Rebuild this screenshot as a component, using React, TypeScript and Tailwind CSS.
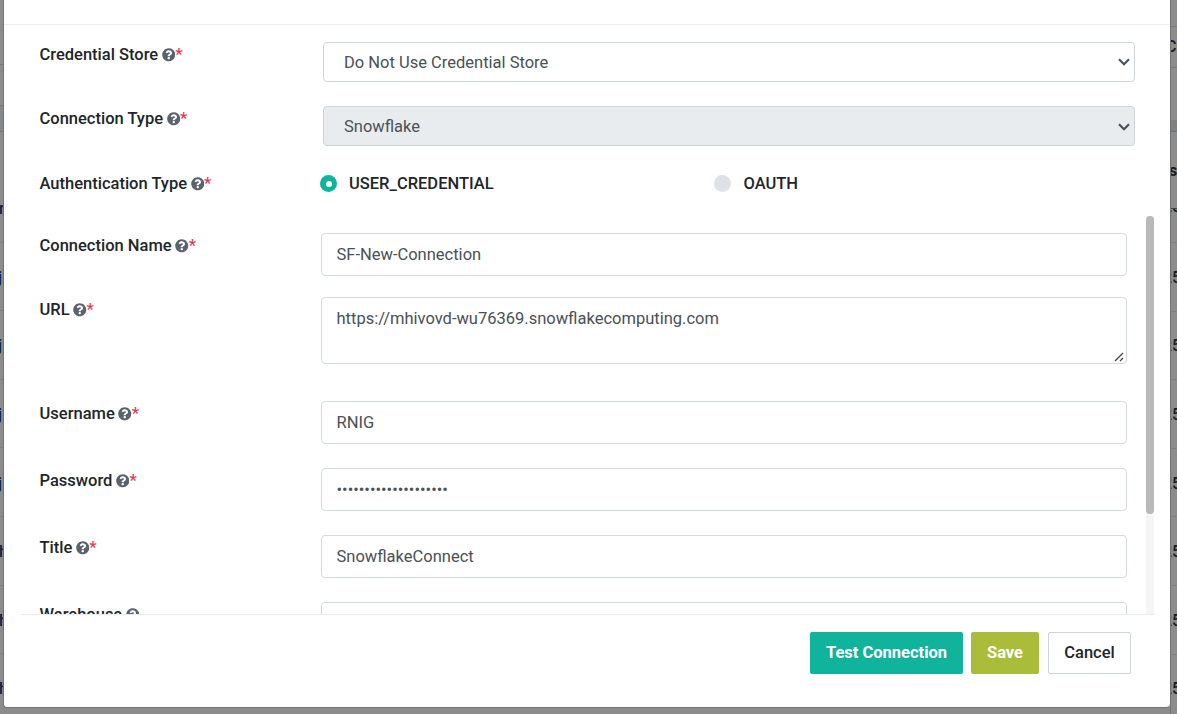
import React from "react";
import { FaQuestionCircle } from "react-icons/fa";

function Label({ text, required = true }: { text: string; required?: boolean }) {
  return (
    <div className="flex h-6 w-[281.5px] shrink-0 items-center whitespace-nowrap pl-[0.5px] text-[16.5px] font-medium leading-6 text-[#212529]">
      <span>{text}</span>
      <FaQuestionCircle className="ml-[3.5px] size-[13.5px] text-[#59636e]" />
      {required && <span className="font-medium text-[#e8384f]">*</span>}
    </div>
  );
}

function Chevron() {
  return (
    <svg className="mt-[1px] h-2 w-3" viewBox="0 0 12 8" fill="none" stroke="#495057" strokeWidth="2.1">
      <path d="M1 1.2 6 6.2l5-5" />
    </svg>
  );
}

function Select({ value, className }: { value: string; className: string }) {
  return (
    <div className={`flex w-[812px] items-center justify-between rounded-[4px] border border-[#ced4da] pl-5 pr-[4px] text-[16.5px] text-[#495057] ${className}`}>
      <span className="pt-[3px]">{value}</span>
      <Chevron />
    </div>
  );
}

function Field({ label, required, height, children }: { label: string; required?: boolean; height: string; children: React.ReactNode }) {
  return (
    <div className={`flex shrink-0 items-start pl-[35px] ${height}`}>
      <div className="mt-[18px]">
        <Label text={label} required={required} />
      </div>
      <div className="mt-[17px]">{children}</div>
    </div>
  );
}

function TextBox({ value = "" }: { value?: string }) {
  return (
    <div className="flex h-[42.5px] w-[806px] items-center rounded-[4px] border border-[#d3d8de] pl-[15px] pt-[3px] text-[16.5px] text-[#495057]">
      {value}
    </div>
  );
}

function LeftEdge() {
  const items = ["r", "j", "j", "j", "j", "h", "h", "h"];
  return (
    <div className="flex w-[3px] shrink-0 flex-col overflow-hidden bg-[#8c8c8c]">
      <div className="h-[65px] shrink-0 border-b border-[#7b7b7b]" />
      <div className="h-[41px] shrink-0 border-b border-[#7b7b7b]" />
      <div className="h-[26px] shrink-0 border-b border-[#76797c] bg-[#85888b]" />
      <div className="h-[42px] shrink-0" />
      {items.map((t, i) => (
        <div key={i} className="flex h-[68.6px] shrink-0 items-center border-b border-[#808080] pt-[3px] text-[16px] font-medium text-[#12203f]">
          <span className={t === "j" ? "-ml-[2px]" : "-ml-[1px]"}>{t}</span>
        </div>
      ))}
    </div>
  );
}

function RightEdge() {
  return (
    <div className="flex w-[7px] shrink-0 flex-col overflow-hidden border-l border-[#737373] bg-[#8c8c8c] text-[16px] font-medium text-[#17191c]">
      <div className="h-[27px] shrink-0 border-b border-[#7b7b7b]" />
      <div className="flex h-[41px] shrink-0 items-center border-b border-[#7b7b7b]">
        <span className="-ml-[5px]">C</span>
      </div>
      <div className="h-[52px] shrink-0" />
      <div className="h-[12px] shrink-0 border-b border-[#6c7682] bg-[#7c8186]" />
      <div className="flex h-[77px] shrink-0 items-center border-b border-[#34496b] pt-[1px]">
        <span className="-ml-[2px] font-bold">s</span>
      </div>
      <div className="flex h-[34px] shrink-0 items-start overflow-hidden border-b border-[#808080]">
        <span className="-ml-[8px] -mt-[14px]">25</span>
      </div>
      {[1, 2, 3, 4, 5, 6, 7].map((k) => (
        <div key={k} className="flex h-[68.6px] shrink-0 items-center border-b border-[#808080] pt-[2px]">
          <span className="-ml-[8px]">25</span>
        </div>
      ))}
    </div>
  );
}

export default function App() {
  return (
    <div className="flex h-[714px] w-[1177px] overflow-hidden bg-[#8c8c8c] font-[Roboto,sans-serif]">
      <LeftEdge />
      <div className="flex h-[708px] w-[1167px] shrink-0 flex-col rounded-b-[4px] border-b border-l border-[#737373] bg-white">
        <div className="h-[25px] shrink-0 border-b border-[#eff0f2]" />
        <div className="flex h-16 shrink-0 items-start pl-[35px] pt-[17px]">
          <div className="mt-[1px]"><Label text="Credential Store" /></div>
          <Select value="Do Not Use Credential Store" className="ml-[2.5px] h-[39.5px] bg-white" />
        </div>
        <div className="flex h-16 shrink-0 items-start pl-[35px] pt-[17px]">
          <div className="mt-[1px]"><Label text="Connection Type" /></div>
          <Select value="Snowflake" className="ml-[2.5px] h-10 bg-[#e9ecef]" />
        </div>
        <div className="flex h-[63px] shrink-0 items-start pl-[35px] pt-[19px]">
          <Label text="Authentication Type" />
          <div className="-ml-[0.5px] flex h-6 items-center text-[16.5px] font-medium text-[#212529]">
            <span className="mb-[1px] flex size-[17px] items-center justify-center rounded-full bg-[#10b39b]">
              <span className="size-[6px] rounded-full bg-white" />
            </span>
            <span className="ml-3 w-[365px]">USER_CREDENTIAL</span>
            <span className="mb-[1px] size-[17px] rounded-full bg-[#dee2e6]" />
            <span className="ml-[12.5px]">OAUTH</span>
          </div>
        </div>
        <div className="flex h-[398px] shrink-0">
          <div className="flex w-[1142px] shrink-0 flex-col overflow-hidden">
            <Field label="Connection Name" height="h-16"><TextBox value="SF-New-Connection" /></Field>
            <Field label="URL" height="h-[104px]">
              <div className="flex h-[67px] w-[806px] justify-between rounded-[4px] border border-[#d3d8de] pl-[15px] pr-[2px] pt-[9px] text-[16.5px] leading-6 text-[#495057]">
                <span>https://mhivovd-wu76369.snowflakecomputing.com</span>
                <svg className="mb-[1px] size-[10px] self-end" viewBox="0 0 10 10" stroke="#444" strokeWidth="1.3" fill="none">
                  <path d="M1 9 9 1M6 9l3-3" />
                </svg>
              </div>
            </Field>
            <Field label="Username" height="h-[67px]"><TextBox value="RNIG" /></Field>
            <Field label="Password" height="h-[67px]"><TextBox value="••••••••••••••••••••" /></Field>
            <Field label="Title" height="h-[67px]"><TextBox value="SnowflakeConnect" /></Field>
            <Field label="Warehouse" required={false} height="h-[67px]"><TextBox /></Field>
          </div>
          <div className="w-2 bg-[#f5f5f5]">
            <div className="h-[298px] rounded-[4px] bg-[#b9b9b9]" />
          </div>
        </div>
        <div className="ml-[17px] flex w-[1133px] items-start justify-end border-t border-[#e9ecef] pr-[23px] pt-[17px] text-[16.5px]">
          <div className="flex h-[42px] w-[153px] items-center justify-center rounded-[2px] bg-[#10b39b] font-bold text-white">Test Connection</div>
          <div className="ml-2 flex h-[42px] w-[68px] items-center justify-center rounded-[2px] bg-[#a9bd3a] font-bold text-white">Save</div>
          <div className="ml-[9px] flex h-[42px] w-[83px] items-center justify-center rounded-[2px] border border-[#ced4da] font-medium text-[#212529]">Cancel</div>
        </div>
      </div>
      <RightEdge />
    </div>
  );
}
